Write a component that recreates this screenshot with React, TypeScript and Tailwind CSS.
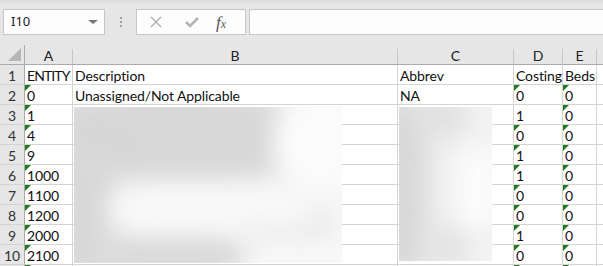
import React from "react";

const cols = [48, 325, 116, 49, 34];
const letters = ["A", "B", "C", "D", "E"];

type Row = { a: string; b?: string; c?: string; d: string; e: string; tA?: boolean; tD?: boolean; tE?: boolean };

const rows: Row[] = [
  { a: "ENTITY", b: "Description", c: "Abbrev", d: "Costing", e: "Beds" },
  { a: "0", b: "Unassigned/Not Applicable", c: "NA", d: "0", e: "0", tA: true, tD: true, tE: true },
  { a: "1", d: "1", e: "0", tA: true, tD: false, tE: true },
  { a: "4", d: "0", e: "0", tA: true, tD: true, tE: true },
  { a: "9", d: "1", e: "0", tA: true, tD: true, tE: true },
  { a: "1000", d: "1", e: "0", tA: true, tD: true, tE: true },
  { a: "1100", d: "0", e: "0", tA: true, tD: true, tE: true },
  { a: "1200", d: "0", e: "0", tA: true, tD: true, tE: true },
  { a: "2000", d: "1", e: "0", tA: true, tD: true, tE: true },
  { a: "2100", d: "0", e: "0", tA: true, tD: true, tE: true },
];

const Tri = () => (
  <span className="absolute left-0 top-0 w-0 h-0 border-t-[6px] border-t-[#1e7b1e] border-r-[6px] border-r-transparent" />
);

const Cell = ({ w, text, tri }: { w: number; text?: string; tri?: boolean }) => (
  <div
    className="relative shrink-0 h-[20px] border-r border-b border-[#d4d4d4] pl-[2px] leading-[21px] overflow-visible whitespace-nowrap text-[14px] tracking-[-0.1px] text-[#111]"
    style={{ width: w }}
  >
    {tri && <Tri />}
    {text === "ENTITY" ? <span className="tracking-[-0.9px]">{text}</span> : text}
  </div>
);

export default function App() {
  return (
    <div className="w-[603px] h-[266px] overflow-hidden bg-white font-['Lato','Liberation_Sans',sans-serif] relative">
      {/* formula bar */}
      <div className="h-[45px] bg-[#e6e6e6] bg-gradient-to-b from-[#dcdcdc] to-[#e6e6e6] to-[12%] flex items-start pt-[9px] pl-[3px]">
        <div className="w-[102px] h-[26px] bg-[#fdfdfd] border border-[#c6c6c6] flex items-center justify-between pl-[7px] pr-[6px]">
          <span className="text-[13px] text-[#222] font-['Noto_Sans',sans-serif]">I10</span>
          <span className="w-0 h-0 border-l-[5px] border-r-[5px] border-t-[4px] border-l-transparent border-r-transparent border-t-[#777]" />
        </div>
        <div className="w-[31px] h-[26px] flex flex-col items-center justify-center gap-[2px]">
          <span className="w-[2px] h-[2px] bg-[#a0a0a0]" />
          <span className="w-[2px] h-[2px] bg-[#a0a0a0]" />
          <span className="w-[2px] h-[2px] bg-[#a0a0a0]" />
        </div>
        <div className="w-[110px] h-[26px] bg-[#fdfdfd] border border-[#c6c6c6] flex items-center">
          <svg width="14" height="14" viewBox="0 0 14 14" className="ml-[12px]">
            <path d="M2 2 L12 12 M12 2 L2 12" stroke="#b0b0b0" strokeWidth="1.4" />
          </svg>
          <svg width="16" height="14" viewBox="0 0 16 14" className="ml-[21px]">
            <path d="M2 7 L6 11 L14 3" stroke="#b4b4b4" strokeWidth="2.6" fill="none" />
          </svg>
          <span className="ml-[16px] text-[17px] italic text-[#555] font-['Liberation_Serif',serif] leading-none">
            f<span className="text-[12px]">x</span>
          </span>
        </div>
        <div className="ml-[3px] flex-1 h-[26px] bg-[#fdfdfd] border border-[#c6c6c6] border-r-0" />
      </div>

      {/* column headers */}
      <div className="flex h-[20px] bg-[#e6e6e6] border-b border-[#ababab]">
        <div className="relative w-[25px] shrink-0 border-r border-[#ababab]">
          <span className="absolute right-[3px] bottom-[3px] w-0 h-0 border-b-[13px] border-b-[#b6b6b6] border-l-[13px] border-l-transparent" />
        </div>
        {cols.map((w, i) => (
          <div
            key={i}
            className="shrink-0 text-center text-[14px] text-[#222] border-r border-[#c6c6c6] mt-[4px] h-[15px] flex items-center justify-center"
            style={{ width: w }}
          >
            <span className="-mt-[3px]">{letters[i]}</span>
          </div>
        ))}
        <div className="flex-1" />
      </div>

      {/* rows */}
      {rows.map((r, i) => (
        <div key={i} className="flex h-[20px]">
          <div className="w-[25px] shrink-0 h-[20px] bg-[#e6e6e6] border-r border-[#ababab] border-b border-b-[#d4d4d4] text-center leading-[21px] text-[14px] text-[#333]">
            {i + 1}
          </div>
          <Cell w={cols[0]} text={r.a} tri={r.tA} />
          <Cell w={cols[1]} text={r.b} />
          <Cell w={cols[2]} text={r.c} />
          <Cell w={cols[3]} text={r.d} tri={r.tD} />
          <Cell w={cols[4]} text={r.e} tri={r.tE} />
          <div className="flex-1 h-[20px] border-b border-[#d4d4d4]" />
        </div>
      ))}
      <div className="flex h-[20px]">
        <div className="w-[25px] shrink-0 bg-[#e6e6e6] border-r border-[#ababab]" />
        <Cell w={cols[0]} tri />
        <Cell w={cols[1]} />
        <Cell w={cols[2]} />
        <Cell w={cols[3]} tri />
        <Cell w={cols[4]} tri />
      </div>

      {/* redaction blur over B */}
      <div className="absolute left-[74px] top-[107px] w-[268px] h-[156px] overflow-hidden bg-[#f8f8f8]">
        <div className="absolute -left-[30px] -top-[20px] w-[250px] h-[100px] rounded-full bg-[#d7d7d7] blur-[16px]" />
        <div className="absolute -left-[20px] top-[40px] w-[60px] h-[140px] rounded-full bg-[#d8d8d8] blur-[12px]" />
        <div className="absolute left-[20px] top-[125px] w-[150px] h-[50px] rounded-full bg-[#dadada] blur-[12px]" />
        <div className="absolute left-[160px] top-[100px] w-[100px] h-[30px] rounded-full bg-[#e8e8e8] blur-[12px]" />
        <div className="absolute left-[40px] top-[80px] w-[200px] h-[40px] rounded-full bg-[#f9f9f9] blur-[14px]" />
        <div className="absolute left-[200px] -top-[10px] w-[90px] h-[90px] rounded-full bg-[#fbfbfb] blur-[12px]" />
      </div>

      {/* redaction blur over C */}
      <div className="absolute left-[399px] top-[107px] w-[93px] h-[154px] overflow-hidden bg-[#f3f3f3]">
        <div className="absolute -left-[20px] -top-[10px] w-[50px] h-[180px] rounded-full bg-[#d8d8d8] blur-[12px]" />
        <div className="absolute left-[10px] -top-[10px] w-[60px] h-[40px] rounded-full bg-[#e0e0e0] blur-[12px]" />
        <div className="absolute left-[20px] top-[120px] w-[50px] h-[40px] rounded-full bg-[#e2e2e2] blur-[12px]" />
        <div className="absolute left-[60px] top-[40px] w-[40px] h-[80px] rounded-full bg-[#fbfbfb] blur-[10px]" />
      </div>
    </div>
  );
}
